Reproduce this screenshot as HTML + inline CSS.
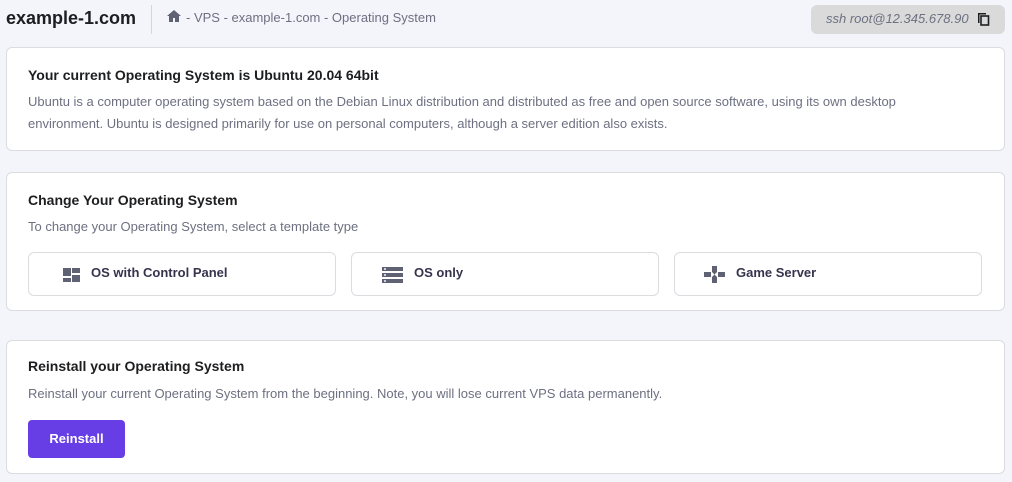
<!DOCTYPE html>
<html><head><style>
*{box-sizing:border-box;margin:0;padding:0}
body{width:1012px;height:482px;background:#f4f4fb;font-family:"Liberation Sans",sans-serif;position:relative;overflow:hidden;color:#1d1e20}
.abs{position:absolute}
.card{position:absolute;left:6px;width:999px;background:#fff;border:1px solid #dadce0;border-radius:6px}
.t{position:absolute;left:21px;font-size:14px;font-weight:bold;color:#1d1e20}
.p{position:absolute;left:21px;font-size:13px;line-height:22px;color:#6d7081;width:890px}
.btn{position:absolute;top:79px;width:308px;height:44px;border:1px solid #dadce0;border-radius:6px;font-size:13px;font-weight:bold;color:#36344d}
.btn span{position:absolute;top:12px}
.btn svg{position:absolute;top:14px}
</style></head><body>
<div class="abs" style="left:6px;top:8px;font-size:18px;font-weight:bold">example-1.com</div>
<div class="abs" style="left:151px;top:5px;width:1px;height:29px;background:#d5d5de"></div>
<svg class="abs" style="left:167px;top:10px" width="14" height="12" viewBox="0 0 14 12"><path d="M7 0L0 6h2v6h4V8h2v4h4V6h2z" fill="#5f6272"/></svg>
<div class="abs" style="left:186px;top:10px;font-size:13px;color:#6d7081">- VPS - example-1.com - Operating System</div>
<div class="abs" style="left:811px;top:5px;width:194px;height:29px;background:#dadada;border-radius:6px"></div>
<div class="abs" style="left:826px;top:11px;font-size:13px;font-style:italic;color:#6d7081">ssh root@12.345.678.90</div>
<svg class="abs" style="left:977px;top:12px" width="13" height="14" viewBox="0 0 13 14"><path d="M1 1h8v1.5H2.5V11H1z" fill="#1d1e20"/><rect x="4" y="4" width="7.5" height="9" fill="none" stroke="#1d1e20" stroke-width="1.6"/></svg>

<div class="card" style="top:47px;height:104px">
<div class="t" style="top:19px">Your current Operating System is Ubuntu 20.04 64bit</div>
<div class="p" style="top:43px">Ubuntu is a computer operating system based on the Debian Linux distribution and distributed as free and open source software, using its own desktop environment. Ubuntu is designed primarily for use on personal computers, although a server edition also exists.</div>
</div>

<div class="card" style="top:172px;height:139px">
<div class="t" style="top:19px">Change Your Operating System</div>
<div class="p" style="top:43px">To change your Operating System, select a template type</div>
<div class="btn" style="left:21px"><svg style="left:34px" width="17" height="15" viewBox="0 0 17 15"><rect x="0" y="1" width="8" height="8" fill="#5f6272"/><rect x="9" y="1" width="8" height="5" fill="#5f6272"/><rect x="0" y="11" width="8" height="4" fill="#5f6272"/><rect x="9" y="8" width="8" height="7" fill="#5f6272"/></svg><span style="left:62px">OS with Control Panel</span></div>
<div class="btn" style="left:344px"><svg style="left:30px" width="21" height="16" viewBox="0 0 21 16"><rect x="0" y="0" width="21" height="4" fill="#5f6272"/><rect x="0" y="6" width="21" height="4" fill="#5f6272"/><rect x="0" y="12" width="21" height="4" fill="#5f6272"/><rect x="2" y="1.3" width="2" height="1.4" fill="#fff"/><rect x="2" y="7.3" width="2" height="1.4" fill="#fff"/><rect x="2" y="13.3" width="2" height="1.4" fill="#fff"/></svg><span style="left:62px">OS only</span></div>
<div class="btn" style="left:667px"><svg style="left:29px;top:13px" width="21" height="17" viewBox="0 0 21 17"><path d="M0 6h7v5H0zM14 6h7v5h-7zM8 0h5v6l-2.5 2.5L8 6zM8 17h5v-6l-2.5-2.5L8 11z" fill="#5f6272"/></svg><span style="left:61px">Game Server</span></div>
</div>

<div class="card" style="top:340px;height:134px">
<div class="t" style="top:17px">Reinstall your Operating System</div>
<div class="p" style="top:42px">Reinstall your current Operating System from the beginning. Note, you will lose current VPS data permanently.</div>
<div class="abs" style="left:21px;top:79px;width:97px;height:38px;background:#673de6;border-radius:4px;color:#fff;font-size:13px;font-weight:bold;text-align:center;line-height:38px">Reinstall</div>
</div>
</body></html>
